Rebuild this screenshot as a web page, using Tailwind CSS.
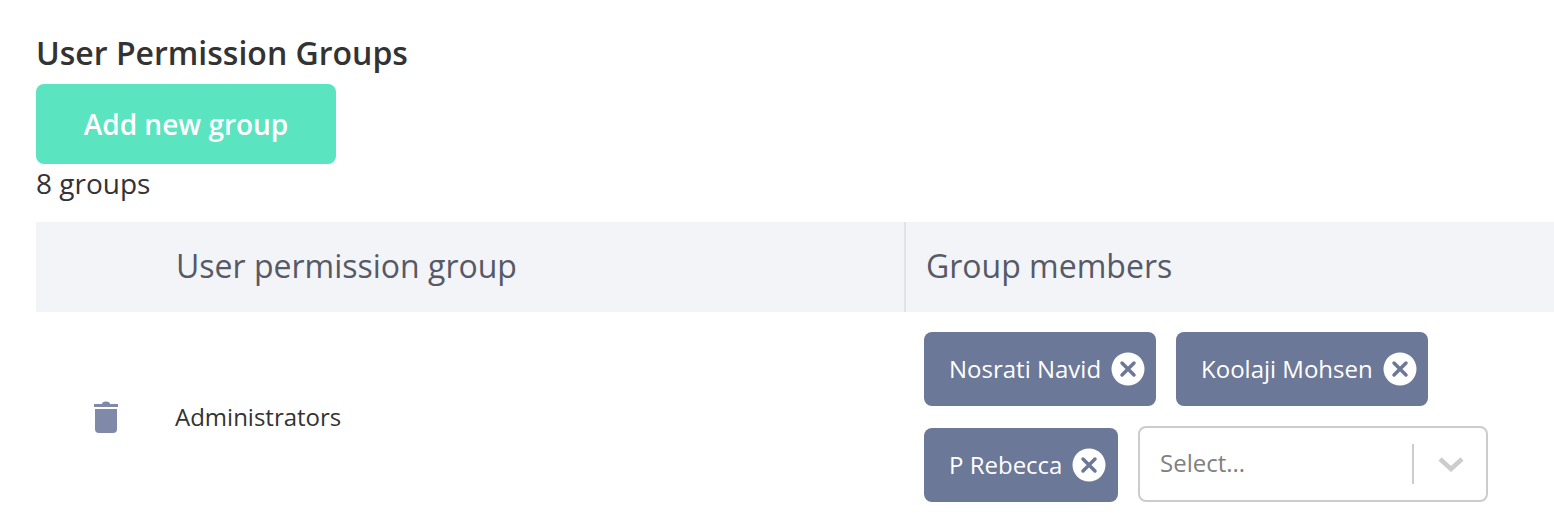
<!DOCTYPE html>
<html>
<head>
<meta charset="utf-8">
<script src="https://cdn.jsdelivr.net/npm/@tailwindcss/browser@4"></script>
</head>
<body class="bg-white h-[520px] overflow-hidden font-['Open_Sans',sans-serif]">
<div class="pl-9 pt-[32px]">
  <h1 class="text-[32px] leading-[42px] h-[40px] font-semibold text-[#333333] whitespace-nowrap">User Permission Groups</h1>
  <button class="mt-[12px] block w-[300px] h-[80px] rounded-[8px] bg-[#5ae4c0] text-white text-[28px] font-semibold">Add new group</button>
  <div class="text-[28px] leading-[38px] h-[58px] text-[#333333]">8 groups</div>
  <div class="flex h-[90px] bg-[#f3f4f8] text-[32px] leading-[42px] text-[#555a66] items-center">
    <div class="w-[870px] h-full flex items-center pl-[140px] pb-[2px] border-r-2 border-[#e2e3e8]">User permission group</div>
    <div class="pl-5 pb-[2px]">Group members</div>
  </div>
  <div class="flex">
    <div class="w-[140px] flex items-center justify-center">
      <svg class="w-[26px] h-[32px] mr-[1px]" viewBox="0 0 26 32" fill="#8089a8"><path d="M9.5 1.5 Q13 -0.5 16.5 1.5 L17 3 H25 V6 H1 V3 H9Z"/><path d="M2 8 H24 V28 Q24 32 20 32 H6 Q2 32 2 28Z"/></svg>
    </div>
    <div class="w-[728px] flex items-center text-[24px] text-[#333333] -ml-px">Administrators</div>
    <div class="w-[624px] pl-[21px] pt-5 pb-5 flex flex-col">
      <div class="flex gap-5">
        <div class="flex items-center h-[74px] w-[232px] pl-[25px] rounded-[8px] bg-[#6c7897] text-white text-[24px]"><span class="whitespace-nowrap">Nosrati Navid</span>
          <svg class="ml-[10px] w-[34px] h-[34px]" viewBox="0 0 34 34"><circle cx="17" cy="17" r="16.5" fill="#fff"/><path d="M11 11 L23 23 M23 11 L11 23" stroke="#6c7897" stroke-width="3.5" stroke-linecap="round"/></svg>
        </div>
        <div class="flex items-center h-[74px] w-[252px] pl-[25px] rounded-[8px] bg-[#6c7897] text-white text-[24px]"><span class="whitespace-nowrap">Koolaji Mohsen</span>
          <svg class="ml-[10px] w-[34px] h-[34px]" viewBox="0 0 34 34"><circle cx="17" cy="17" r="16.5" fill="#fff"/><path d="M11 11 L23 23 M23 11 L11 23" stroke="#6c7897" stroke-width="3.5" stroke-linecap="round"/></svg>
        </div>
      </div>
      <div class="flex gap-5 mt-5 items-end">
        <div class="flex items-center h-[74px] w-[194px] pl-[25px] rounded-[8px] bg-[#6c7897] text-white text-[24px]"><span class="whitespace-nowrap">P Rebecca</span>
          <svg class="ml-[10px] w-[34px] h-[34px]" viewBox="0 0 34 34"><circle cx="17" cy="17" r="16.5" fill="#fff"/><path d="M11 11 L23 23 M23 11 L11 23" stroke="#6c7897" stroke-width="3.5" stroke-linecap="round"/></svg>
        </div>
        <div class="flex items-center h-[76px] w-[350px] rounded-[8px] border-2 border-[#cccccc] bg-white">
          <div class="w-[272px] pl-5 pb-[2px] text-[24px] text-[#808080]">Select...</div>
          <div class="w-[2px] h-[40px] bg-[#cccccc]"></div>
          <svg class="ml-[23px] w-[28px] h-[16px]" viewBox="0 0 28 16"><path d="M3 3 L14 13 L25 3" fill="none" stroke="#cccccc" stroke-width="4.5"/></svg>
        </div>
      </div>
    </div>
  </div>
</div>
</body>
</html>
